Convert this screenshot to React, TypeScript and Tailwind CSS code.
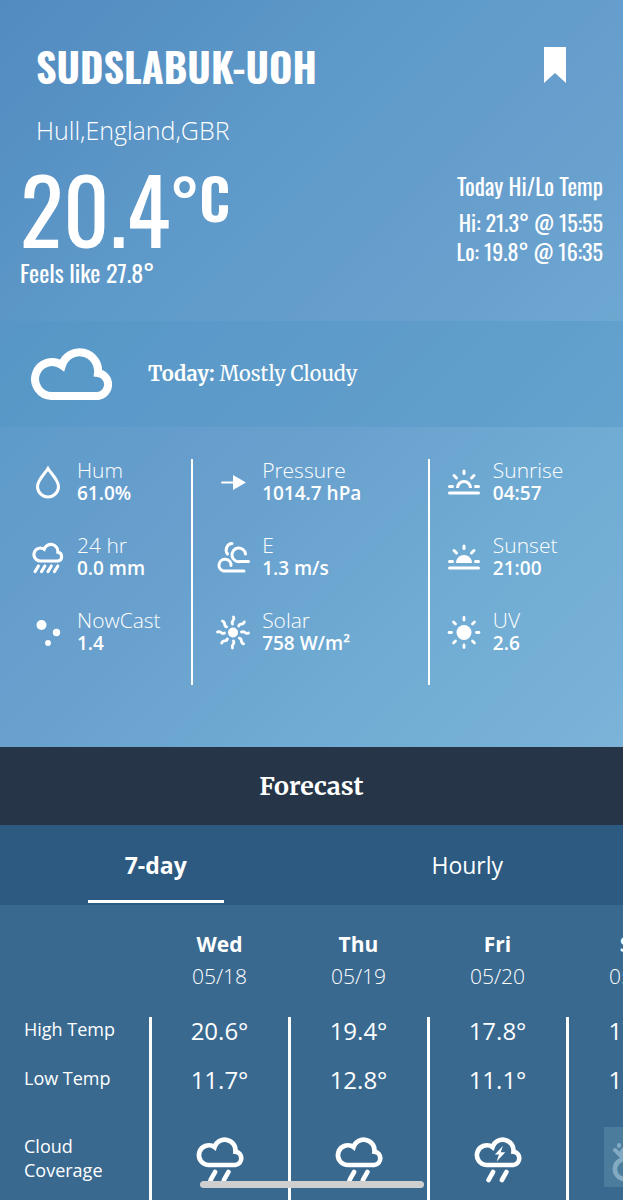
import { ReactNode, useState } from "react";

const CLOUD =
  "M21.5 50A17 17 0 1 1 32 19.2A18.5 18.5 0 0 1 68 27A11.6 11.6 0 0 1 68 50Z";

const display = "font-['Oswald','Liberation_Sans_Narrow',sans-serif]";
const serif = "font-['Merriweather','DejaVu_Serif',serif]";

const StatIcon = ({ children }: { children: ReactNode }) => (
  <svg
    className="w-9 h-9 shrink-0"
    viewBox="0 0 36 36"
    fill="none"
    stroke="white"
    strokeWidth="3"
    strokeLinecap="round"
    aria-hidden="true">
    {children}
  </svg>
);

const DropIcon = () => (
  <StatIcon>
    <path d="M18 4.5C15 9.5 7.500 16 7.500 22.500A10.500 10.500 0 0 0 28.500 22.500C28.500 16 21 9.500 18 4.500Z" />
  </StatIcon>
);

const RainIcon = () => (
  <StatIcon>
    <g transform="translate(2 3) scale(0.38)" strokeWidth="8">
      <path d={CLOUD} />
      <path d="M17 63L8 78M34 63L25 78M51 63L42 78M68 63L59 78" />
    </g>
  </StatIcon>
);

const ParticlesIcon = () => (
  <StatIcon>
    <g fill="white" stroke="none">
      <circle cx="11.500" cy="11" r="5" />
      <circle cx="26.500" cy="18.500" r="3.700" />
      <circle cx="18" cy="29" r="2.900" />
    </g>
  </StatIcon>
);

const ArrowIcon = () => (
  <StatIcon>
    <path d="M7 18.500H20" strokeWidth="2" />
    <path d="M18 11L31 18.500L18 26Z" fill="white" stroke="none" />
  </StatIcon>
);

const WindIcon = () => (
  <StatIcon>
    <path d="M16 26.500A6 6 0 1 0 8.500 32H29" />
    <path d="M30.500 15A6.800 6.800 0 1 0 25 22.500H33.500" />
    <path d="M12.500 15C9.500 11 12 4.500 17 4.500" />
  </StatIcon>
);

const SolarIcon = () => (
  <StatIcon>
    <circle cx="18" cy="18.500" r="5" fill="white" stroke="none" />
    <g strokeWidth="2.800">
      {[0, 45, 90, 135, 180, 225, 270, 315].map((angle) => (
        <path
          key={angle}
          d="M17.500 10C15.500 7 20.500 6.500 18.500 3"
          transform={`rotate(${angle} 18 18.500)`}
        />
      ))}
    </g>
  </StatIcon>
);

const HorizonIcon = ({ filled }: { filled?: boolean }) => (
  <StatIcon>
    <path
      d="M11.500 24A6.500 6.500 0 0 1 24.500 24"
      strokeLinecap="butt"
      fill={filled ? "white" : "none"}
    />
    <path d="M3.500 22.500H6.500M29.500 22.500H32.500M18 7V9.500M8 11.500L10.500 14M28 11.500L25.500 14M3.500 29H32.500" />
  </StatIcon>
);

const SunIcon = () => (
  <StatIcon>
    <circle cx="18" cy="18.500" r="7.500" fill="white" stroke="none" />
    <path
      d="M18 3.500V6M18 31V33.500M3 18.500H5.500M30.500 18.500H33M7.500 8L9.500 10M26.500 27L28.500 29M28.500 8L26.500 10M9.500 27L7.500 29"
      strokeWidth="2.800"
    />
  </StatIcon>
);

const ForecastIcon = ({ kind }: { kind: string }) => {
  if (kind === "partly") {
    return (
      <svg
        className="w-[66px] h-[60px] mx-auto bg-[#4c7c9c]"
        viewBox="0 0 66 60"
        fill="none"
        stroke="#82aac2"
        strokeWidth="4"
        strokeLinecap="round"
        role="img"
        aria-label="Partly cloudy">
        <path d="M15 19V18M11 23L18 30M18 30C16 24 20 20 26 22" />
        <g transform="translate(8 23) scale(0.58)" strokeWidth="8">
          <path d={CLOUD} />
        </g>
      </svg>
    );
  }
  return (
    <svg
      className="w-[60px] h-[60px] mx-auto"
      viewBox="0 0 60 60"
      fill="none"
      stroke="white"
      strokeLinecap="round"
      role="img"
      aria-label={kind === "storm" ? "Thunderstorm" : "Rain"}>
      <g transform="translate(6 9) scale(0.58)" strokeWidth="8">
        <path d={CLOUD} />
        <path d="M33 62L25 76M56 62L48 76" />
        {kind === "storm" && (
          <path
            d="M50 17L36 32H43L39 44L54 28H46Z"
            fill="white"
            stroke="none"
          />
        )}
      </g>
    </svg>
  );
};

const statColumns = [
  {
    style: "pl-[30px] border-r-2",
    stats: [
      { label: "Hum", value: "61.0%", icon: <DropIcon /> },
      { label: "24 hr", value: "0.0 mm", icon: <RainIcon /> },
      { label: "NowCast", value: "1.4", icon: <ParticlesIcon /> },
    ],
  },
  {
    style: "pl-[22px] border-r-2",
    stats: [
      { label: "Pressure", value: "1014.7 hPa", icon: <ArrowIcon /> },
      { label: "E", value: "1.3 m/s", icon: <WindIcon /> },
      { label: "Solar", value: "758 W/m²", icon: <SolarIcon /> },
    ],
  },
  {
    style: "pl-4",
    stats: [
      { label: "Sunrise", value: "04:57", icon: <HorizonIcon /> },
      { label: "Sunset", value: "21:00", icon: <HorizonIcon filled /> },
      { label: "UV", value: "2.6", icon: <SunIcon /> },
    ],
  },
];

const days = [
  { day: "Wed", date: "05/18", high: "20.6°", low: "11.7°", kind: "rain" },
  { day: "Thu", date: "05/19", high: "19.4°", low: "12.8°", kind: "rain" },
  { day: "Fri", date: "05/20", high: "17.8°", low: "11.1°", kind: "storm" },
  { day: "Sat", date: "05/21", high: "17.2°", low: "10.6°", kind: "partly" },
];

const tabs = ["7-day", "Hourly"];

const CurrentConditions = () => (
  <section className="bg-[linear-gradient(135deg,#528bc0_0%,#5f9bca_33%,#689fcd_52%,#6fabd3_75%,#7bb3d9_100%)] pb-[62px]">
    <header className="flex items-start justify-between pl-9 pr-14 pt-9">
      <div>
        <h1 className={`${display} text-[40px] leading-[60px] font-bold`}>
          SUDSLABUK-UOH
        </h1>
        <p className="text-[25px] leading-9 font-light mt-4">
          Hull,England,GBR
        </p>
      </div>
      <button type="button" aria-label="Bookmark" className="mt-[11px]">
        <svg className="w-6 h-9" viewBox="0 0 24 36" fill="white">
          <path d="M1 0H23V36L12 26L1 36Z" />
        </svg>
      </button>
    </header>

    <div className={`${display} flex justify-between px-5 pt-4`}>
      <div>
        <p className="flex items-start text-[90px] leading-[88px]">
          20.4
          <span className="text-[56px] leading-[66px] font-semibold">°C</span>
        </p>
        <p className="text-[24px] leading-10">Feels like 27.8°</p>
      </div>
      <div className="text-right text-[22px] leading-[29px] pt-2">
        <p className="text-[23px] mb-[7px]">Today Hi/Lo Temp</p>
        <p>Hi: 21.3° @ 15:55</p>
        <p>Lo: 19.8° @ 16:35</p>
      </div>
    </div>

    <div className="bg-[#5096c6]/40 flex items-center h-[106px] mt-[29px] pl-[30px] gap-8">
      <svg
        className="w-[86px] h-14"
        viewBox="0 0 86 56"
        fill="none"
        stroke="white"
        strokeWidth="8"
        aria-hidden="true">
        <path d={CLOUD} />
      </svg>
      <p className={`${serif} text-[20px] leading-7`}>
        <b>Today:</b> Mostly Cloudy
      </p>
    </div>

    <div className="grid grid-cols-[31%_38%_31%] mt-8">
      {statColumns.map(({ style, stats }) => (
        <dl key={stats[0].label} className={`${style} border-white h-[226px]`}>
          {stats.map(({ label, value, icon }) => (
            <div key={label} className="flex gap-[11px] h-[75px]">
              <div className="pt-[5px]">{icon}</div>
              <div className="leading-[23px] whitespace-nowrap">
                <dt className="text-[21px] font-light">{label}</dt>
                <dd className="text-[19px] font-semibold">{value}</dd>
              </div>
            </div>
          ))}
        </dl>
      ))}
    </div>
  </section>
);

const ForecastTable = () => (
  <div className="grow overflow-x-auto [scrollbar-width:none]">
    <table className="table-fixed w-[706px] text-center [&_td]:border-l-[3px] [&_td]:border-white [&_td]:align-top [&_tbody_th]:align-top [&_tbody_th]:text-left [&_tbody_th]:pl-6 [&_tbody_th]:font-medium [&_tbody_th]:text-[18px] [&_tbody_th]:leading-6">
      <colgroup>
        <col className="w-[150px]" />
        {days.map(({ day }) => (
          <col key={day} className="w-[139px]" />
        ))}
      </colgroup>
      <thead>
        <tr className="h-28 align-top">
          <td className="border-none!" />
          {days.map(({ day, date }) => (
            <th key={day} scope="col" className="pt-[23px] text-[21px] leading-8">
              {day}
              <span className="block font-light">{date}</span>
            </th>
          ))}
        </tr>
      </thead>
      <tbody>
        <tr className="h-[49px]">
          <th scope="row">High Temp</th>
          {days.map(({ day, high }) => (
            <td key={day} className="text-[24px] leading-7 font-medium">
              {high}
            </td>
          ))}
        </tr>
        <tr className="h-[49px]">
          <th scope="row">Low Temp</th>
          {days.map(({ day, low }) => (
            <td key={day} className="text-[24px] leading-7 font-medium">
              {low}
            </td>
          ))}
        </tr>
        <tr className="h-[85px]">
          <th scope="row" className="pt-[19px]">
            Cloud
            <br />
            Coverage
          </th>
          {days.map(({ day, kind }) => (
            <td key={day} className="pt-3">
              <ForecastIcon kind={kind} />
            </td>
          ))}
        </tr>
      </tbody>
    </table>
  </div>
);

const App = () => {
  const [activeTab, setActiveTab] = useState("7-day");

  return (
    <main className="min-h-screen flex flex-col bg-[#39698f] text-white font-['Open_Sans',sans-serif]">
      <CurrentConditions />

      <h2
        className={`${serif} bg-[#263648] text-center font-bold text-[25px] leading-[78px]`}>
        Forecast
      </h2>

      <div role="tablist" className="flex h-20 bg-[#2c5a80]">
        {tabs.map((tab) => (
          <div key={tab} className="flex-1 flex justify-center pb-[2px]">
            <button
              type="button"
              role="tab"
              aria-selected={activeTab === tab}
              onClick={() => setActiveTab(tab)}
              className={`w-[136px] text-[23px] border-b-3 pt-[5px] ${
                activeTab === tab
                  ? "font-bold border-white"
                  : "font-medium border-transparent"
              }`}>
              {tab}
            </button>
          </div>
        ))}
      </div>

      <ForecastTable />

      <div className="fixed bottom-3 left-1/2 -translate-x-1/2 w-56 h-[7px] rounded-full bg-[#cfcfcf]" />
    </main>
  );
};

export default App;
